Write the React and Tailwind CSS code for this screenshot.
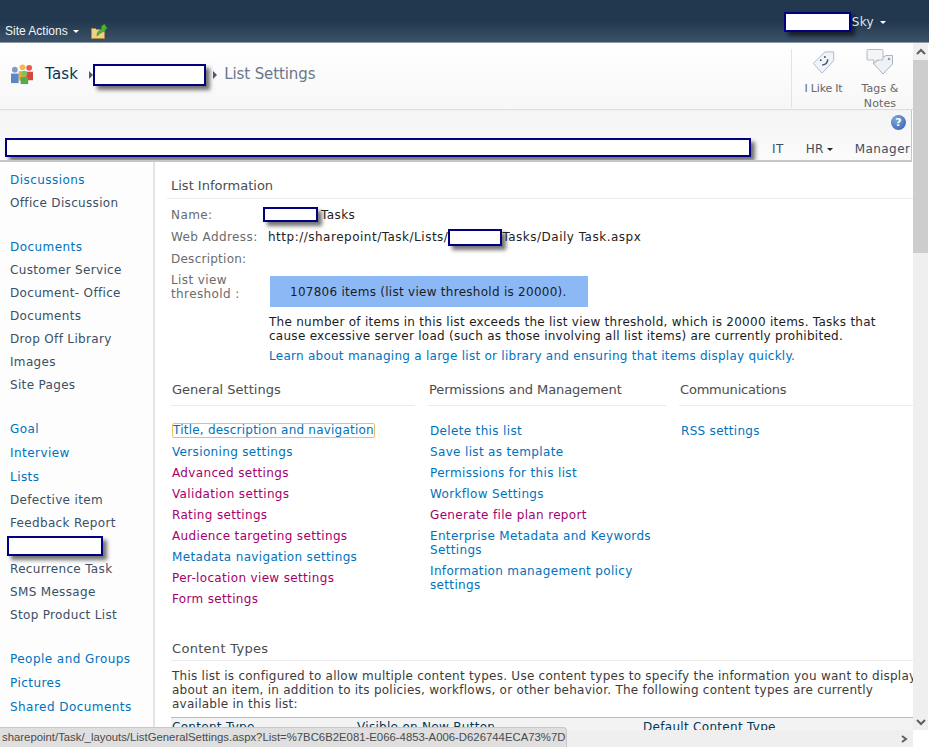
import React from 'react';

const NAV_BLUE = 'text-[#0072bc] tracking-[0.45px]';
const NAV_GRAY = 'text-[#3b4f65] tracking-[0.33px]';

const nav = [
  ['Discussions', `${NAV_BLUE} h-[23px]`],
  ['Office Discussion', `${NAV_GRAY} h-[44px]`],
  ['Documents', `${NAV_BLUE} h-[23px]`],
  ['Customer Service', `${NAV_GRAY} h-[23px]`],
  ['Document- Office', `${NAV_GRAY} h-[23px]`],
  ['Documents', `${NAV_GRAY} h-[23px]`],
  ['Drop Off Library', `${NAV_GRAY} h-[23px]`],
  ['Images', `${NAV_GRAY} h-[23px]`],
  ['Site Pages', `${NAV_GRAY} h-[44px]`],
  ['Goal', `${NAV_BLUE} h-6`],
  ['Interview', `${NAV_BLUE} h-6`],
  ['Lists', `${NAV_BLUE} h-[23px]`],
  ['Defective item', `${NAV_GRAY} h-[23px]`],
  ['Feedback Report', `${NAV_GRAY} h-[23px]`],
  [null, 'h-[23px]'],
  ['Recurrence Task', `${NAV_GRAY} h-[23px]`],
  ['SMS Message', `${NAV_GRAY} h-[23px]`],
  ['Stop Product List', `${NAV_GRAY} h-[44px]`],
  ['People and Groups', `${NAV_BLUE} h-6`],
  ['Pictures', `${NAV_BLUE} h-6`],
  ['Shared Documents', `${NAV_BLUE} h-6`],
];

const BLUE = 'text-[#0072bc]';
const PINK = 'text-[#a6006b]';

const general = [
  ['Versioning settings', BLUE],
  ['Advanced settings', PINK],
  ['Validation settings', PINK],
  ['Rating settings', PINK],
  ['Audience targeting settings', PINK],
  ['Metadata navigation settings', BLUE],
  ['Per-location view settings', PINK],
  ['Form settings', PINK],
];

const permissions = [
  ['Delete this list', BLUE],
  ['Save list as template', BLUE],
  ['Permissions for this list', BLUE],
  ['Workflow Settings', BLUE],
  ['Generate file plan report', PINK],
  ['Enterprise Metadata and Keywords Settings', BLUE],
  ['Information management policy settings', BLUE],
];

function Redact({ className }) {
  return <span className={`inline-block bg-white border-2 border-[#000080] shadow-[4px_4px_4px_rgba(0,0,0,0.55)] ${className}`} />;
}

function PeopleIcon() {
  return (
    <svg width="24" height="21" viewBox="0 0 25 22" className="shrink-0">
      <circle cx="20" cy="4" r="3" fill="#e85a50" />
      <path d="M16 8h8v9h-7z" fill="#d9453d" />
      <circle cx="13" cy="3.500" r="3" fill="#f2b84b" />
      <path d="M9 7.500h8v10H9z" fill="#eead2f" />
      <circle cx="5" cy="6" r="3" fill="#7f9ccc" />
      <path d="M1 10h8v10H1z" fill="#5f86c4" />
      <circle cx="15" cy="10" r="3" fill="#7cc06a" />
      <path d="M11 13.500h8V21h-8z" fill="#59a84a" />
    </svg>
  );
}

function FolderIcon() {
  return (
    <svg width="17" height="15" viewBox="0 0 17 15" className="shrink-0 block">
      <path d="M.5 4.500h4l1 1h8v9H.5z" fill="#f0d084" stroke="#a58a4c" />
      <path d="M6 12c0-4 2-6 4.500-6.500V3L10 2.500 13.500 0 16.500 5H14.500v2C12 7.500 9 9 6 12z" fill="#4fb233" stroke="#2f7d1c" strokeWidth=".5" />
    </svg>
  );
}

function LikeIcon() {
  return (
    <svg width="24" height="25" viewBox="0 0 26 26" className="shrink-0">
      <path d="M1.500 14 14 1.500h9.500V11L11 24.500z" fill="#f1f4f9" stroke="#a9b4c4" strokeLinejoin="round" />
      <circle cx="9.500" cy="10.500" r="1" fill="#3f4f66" />
      <circle cx="14" cy="7" r="1" fill="#3f4f66" />
      <path d="M11 15.500c3.500.5 6-2 6-6" fill="none" stroke="#3f4f66" strokeWidth="1.500" />
    </svg>
  );
}

function TagsIcon() {
  return (
    <svg width="28" height="26" viewBox="0 0 28 26" className="shrink-0">
      <path d="M7 14 20 6.500h6.500V15L17 25z" fill="#eef1f6" stroke="#a9b4c4" strokeLinejoin="round" />
      <circle cx="23" cy="10" r="1.200" fill="#8a97aa" />
      <path d="M1 1.500a1 1 0 0 1 1-1h14a1 1 0 0 1 1 1V10a1 1 0 0 1-1 1h-5l-3 3.500V11H2a1 1 0 0 1-1-1z" fill="#f4f5f7" stroke="#b4bac4" />
    </svg>
  );
}

function ScrollArrow({ d }) {
  return (
    <svg width="10" height="8" viewBox="0 0 10 8">
      <path d={d} fill="none" stroke="#5f5f5f" strokeWidth="2" />
    </svg>
  );
}

function Caret({ className = 'border-t-white' }) {
  return <span className={`inline-block w-0 h-0 border-x-[3px] border-x-transparent border-t-[3px] ${className}`} />;
}

function Crumb() {
  return <span className="inline-block w-0 h-0 border-y-4 border-y-transparent border-l-[4px] border-l-[#4a5a70]" />;
}

function SectionHead({ children, className = '' }) {
  return (
    <div className="h-[25px] border-b border-[#ebebeb] text-[13px] leading-[17px] text-[#4c4c4c]">
      <span className={`pl-px ${className}`}>{children}</span>
    </div>
  );
}

function SettingLinks({ items }) {
  return items.map(([label, color]) => (
    <div key={label} className={`${color} leading-[14px] mb-[7px] tracking-[0.34px]`}>{label}</div>
  ));
}

export default function App() {
  return (
    <div className="w-[929px] h-[747px] overflow-hidden relative bg-white flex flex-col font-['DejaVu_Sans',Verdana,sans-serif] text-[12px]">
      {/* top bar */}
      <div className="h-[43px] shrink-0 flex items-end justify-between bg-gradient-to-b from-[#21384f] from-50% to-[#3b5269] border-b border-[#8a98a8]">
        <div className="flex items-center pb-[3px] pl-[5px] text-[#f2f5f8] text-[12px] font-['Liberation_Sans',Arial,sans-serif] leading-[14px] h-[19px]">
          <span>Site Actions</span>
          <Caret className="border-t-white ml-[5px]" />
          <span className="ml-[12px]"><FolderIcon /></span>
        </div>
        <div className="self-start flex items-center mt-[12px] mr-[43px] text-[#dfe5ec] text-[12px] tracking-[0.3px]">
          <Redact className="w-[67px] h-[20px]" />
          <span className="ml-px">Sky</span>
          <Caret className="border-t-white ml-[6px]" />
        </div>
      </div>

      <div className="flex-1 min-h-0 flex">
        <div className="w-[913px] flex flex-col min-h-0">
          {/* title row */}
          <div className="h-[67px] shrink-0 flex bg-gradient-to-b from-white to-[#f7f7f7] border-b border-[#dcdcdc]">
            <div className="flex-1 flex items-center pl-[10px] pb-[3px] text-[15px]">
              <PeopleIcon />
              <span className="ml-[11px] text-[#003759] tracking-[0.2px]">Task</span>
              <span className="ml-[11px]"><Crumb /></span>
              <Redact className="w-[113px] h-[22px]" />
              <span className="ml-[7px]"><Crumb /></span>
              <span className="ml-[7px] text-[#6a778a] tracking-[-0.1px]">List Settings</span>
            </div>
            <div className="w-[122px] mt-[6px] mb-px border-l border-[#e3e3e3] flex text-[11px] text-[#676767] text-center leading-[15px] overflow-hidden">
              <div className="w-[63px] flex flex-col items-center pt-px tracking-[-0.2px]">
                <LikeIcon />
                <span className="mt-[6px]">I Like It</span>
              </div>
              <div className="w-[50px] flex flex-col items-center shrink-0 tracking-[0.1px]">
                <TagsIcon />
                <span className="mt-[6px] shrink-0">Tags &amp; Notes</span>
              </div>
            </div>
          </div>

          {/* help + top nav */}
          <div className="h-[52px] shrink-0 mr-px border-b-2 border-r border-[#c6c6c6] bg-gradient-to-b from-[#f5f5f5] to-[#fbfbfb] flex flex-col overflow-hidden">
            <div className="h-[28px] flex justify-end items-center pr-[5px] pb-[4px]">
              <div className="w-[15px] h-[15px] rounded-full bg-[radial-gradient(circle_at_35%_30%,#7da6de,#2f5fae)] text-white text-[11px] font-bold leading-[15px] text-center">?</div>
            </div>
            <div className="flex items-start text-[12px] text-[#3b4f65] leading-[18px] pl-[5px] tracking-[0.4px] whitespace-nowrap">
              <Redact className="w-[746px] h-[19px]" />
              <span className="ml-[21px] mt-[2px]">IT</span>
              <span className="ml-[22px] mt-[2px] flex items-center gap-[3px]">HR <Caret className="border-t-[#222]" /></span>
              <span className="ml-[22px] mt-[2px]">Manager</span>
            </div>
          </div>

          <div className="flex-1 min-h-0 flex overflow-hidden">
            {/* left nav */}
            <div className="w-[155px] shrink-0 border-r-2 border-[#e4e4e4] bg-[#fdfdfd] pt-[8px] pl-[10px] text-[12px] leading-[20px] whitespace-nowrap">
              {nav.map(([label, cls], i) => (
                <div key={i} className={cls}>
                  {label ? label : <Redact className="w-[96px] h-[20px] -ml-[3px] block" />}
                </div>
              ))}
            </div>

            {/* main content */}
            <div className="flex-1 min-w-0 pl-[12px] pt-[15px] text-[12px] leading-[14px] text-[#3b3b3b] overflow-hidden">
              <div className="h-[22px] border-b border-[#ebebeb] text-[13px] leading-[17px] text-[#4c4c4c] pl-[4px]">List Information</div>

              <div className="pl-[4px] text-[#6b6b6b] tracking-[0.4px] h-[22px] mt-[8px] flex items-start">
                <span className="w-[92px] shrink-0 leading-[16px]">Name:</span>
                <span className="flex items-start text-[#222] leading-[16px]">
                  <Redact className="w-[55px] h-[15px]" />
                  <span className="ml-[3px]">Tasks</span>
                </span>
              </div>
              <div className="pl-[4px] text-[#6b6b6b] tracking-[0.4px] h-[22px] flex items-start">
                <span className="w-[97px] shrink-0 leading-[16px]">Web Address:</span>
                <span className="flex items-start text-[#222] leading-[16px] whitespace-nowrap tracking-[0.5px]">
                  <span>http://sharepoint/Task/Lists/</span>
                  <Redact className="w-[54px] h-[17px]" />
                  <span>Tasks/Daily Task.aspx</span>
                </span>
              </div>
              <div className="pl-[4px] text-[#6b6b6b] tracking-[0.25px] h-[20px] leading-[16px]">Description:</div>
              <div className="pl-[4px] flex items-start">
                <div className="w-[99px] shrink-0 text-[#6b6b6b] tracking-[0.4px] leading-[14px] pt-[2px]">List view<br />threshold :</div>
                <div className="mt-[5px]">
                  <div className="w-[318px] h-[31px] bg-[#8cb8f5] text-[#1c1c1c] tracking-[0.27px] flex items-center pl-[20px] whitespace-nowrap">107806 items (list view threshold is 20000).</div>
                  <div className="mt-[8px] -ml-px w-[640px] text-[#1c1c1c] tracking-[0.27px]">The number of items in this list exceeds the list view threshold, which is 20000 items. Tasks that cause excessive server load (such as those involving all list items) are currently prohibited.</div>
                  <div className={`mt-[6px] -ml-px ${BLUE} tracking-[0.26px] whitespace-nowrap`}>Learn about managing a large list or library and ensuring that items display quickly.</div>
                </div>
              </div>

              <div className="flex mt-[18px] pl-[4px] whitespace-nowrap">
                <div className="w-[244px] mr-[13px] shrink-0">
                  <SectionHead>General Settings</SectionHead>
                  <div className="mt-[17px] pl-px">
                    <div className="mb-[7px] w-[203px] h-[15px] border border-[#f0bd5e] rounded-[2px] text-[#0072bc] leading-[13px] tracking-[0.22px]">Title, description and navigation</div>
                    <SettingLinks items={general} />
                  </div>
                </div>
                <div className="w-[238px] mr-[13px] shrink-0">
                  <SectionHead className="tracking-[-0.1px]">Permissions and Management</SectionHead>
                  <div className="mt-[18px] whitespace-normal pl-[2px]">
                    <SettingLinks items={permissions} />
                  </div>
                </div>
                <div className="flex-1 min-w-0">
                  <SectionHead className="tracking-[-0.2px]">Communications</SectionHead>
                  <div className="mt-[18px] pl-[2px]">
                    <div className={`${BLUE} tracking-[0.3px]`}>RSS settings</div>
                  </div>
                </div>
              </div>

              <div className="mt-[27px] pl-[4px]">
                <div className="h-[21px] border-b border-[#ebebeb] text-[13px] leading-[17px] text-[#4c4c4c] tracking-[0.3px] pl-px">Content Types</div>
                <div className="mt-[8px] w-[755px] pl-px text-[#3b3b3b] tracking-[0.25px]">This list is configured to allow multiple content types. Use content types to specify the information you want to display about an item, in addition to its policies, workflows, or other behavior. The following content types are currently available in this list:</div>
                <div className="mt-[6px] h-[14px] bg-[#f3f3f3] border-t border-[#b5bcc4] flex text-[#003759] tracking-[0.3px] overflow-hidden whitespace-nowrap leading-[14px] pt-[2px]">
                  <span className="w-[186px] pl-px shrink-0">Content Type</span>
                  <span className="w-[286px] shrink-0">Visible on New Button</span>
                  <span>Default Content Type</span>
                </div>
              </div>
            </div>
          </div>

          {/* horizontal scrollbar */}
          <div className="h-[17px] shrink-0 bg-[#efefef] flex items-center justify-end pr-[4px]">
            <ScrollArrow d="M3 1l4 3-4 3" />
          </div>
        </div>

        {/* vertical scrollbar */}
        <div className="w-[15px] shrink-0 h-[687px] bg-[#efefef] flex flex-col items-center">
          <div className="h-[17px] flex items-center"><ScrollArrow d="M1 6l4-4 4 4" /></div>
          <div className="w-full h-[193px] bg-[#cdcdcd]" />
          <div className="flex-1" />
          <div className="h-[17px] flex items-center"><ScrollArrow d="M1 2l4 4 4-4" /></div>
        </div>
      </div>

      {/* status bubble */}
      <div className="absolute left-0 bottom-0 h-[20px] w-[567px] bg-[#dfdfdf] rounded-tr-[4px] border-t border-r border-[#c8c8c8] text-[#4a4a4a] text-[11.35px] font-['Liberation_Sans',Arial,sans-serif] leading-[19px] pl-[2px] whitespace-nowrap overflow-hidden">
        sharepoint/Task/_layouts/ListGeneralSettings.aspx?List=%7BC6B2E081-E066-4853-A006-D626744ECA73%7D
      </div>
    </div>
  );
}
